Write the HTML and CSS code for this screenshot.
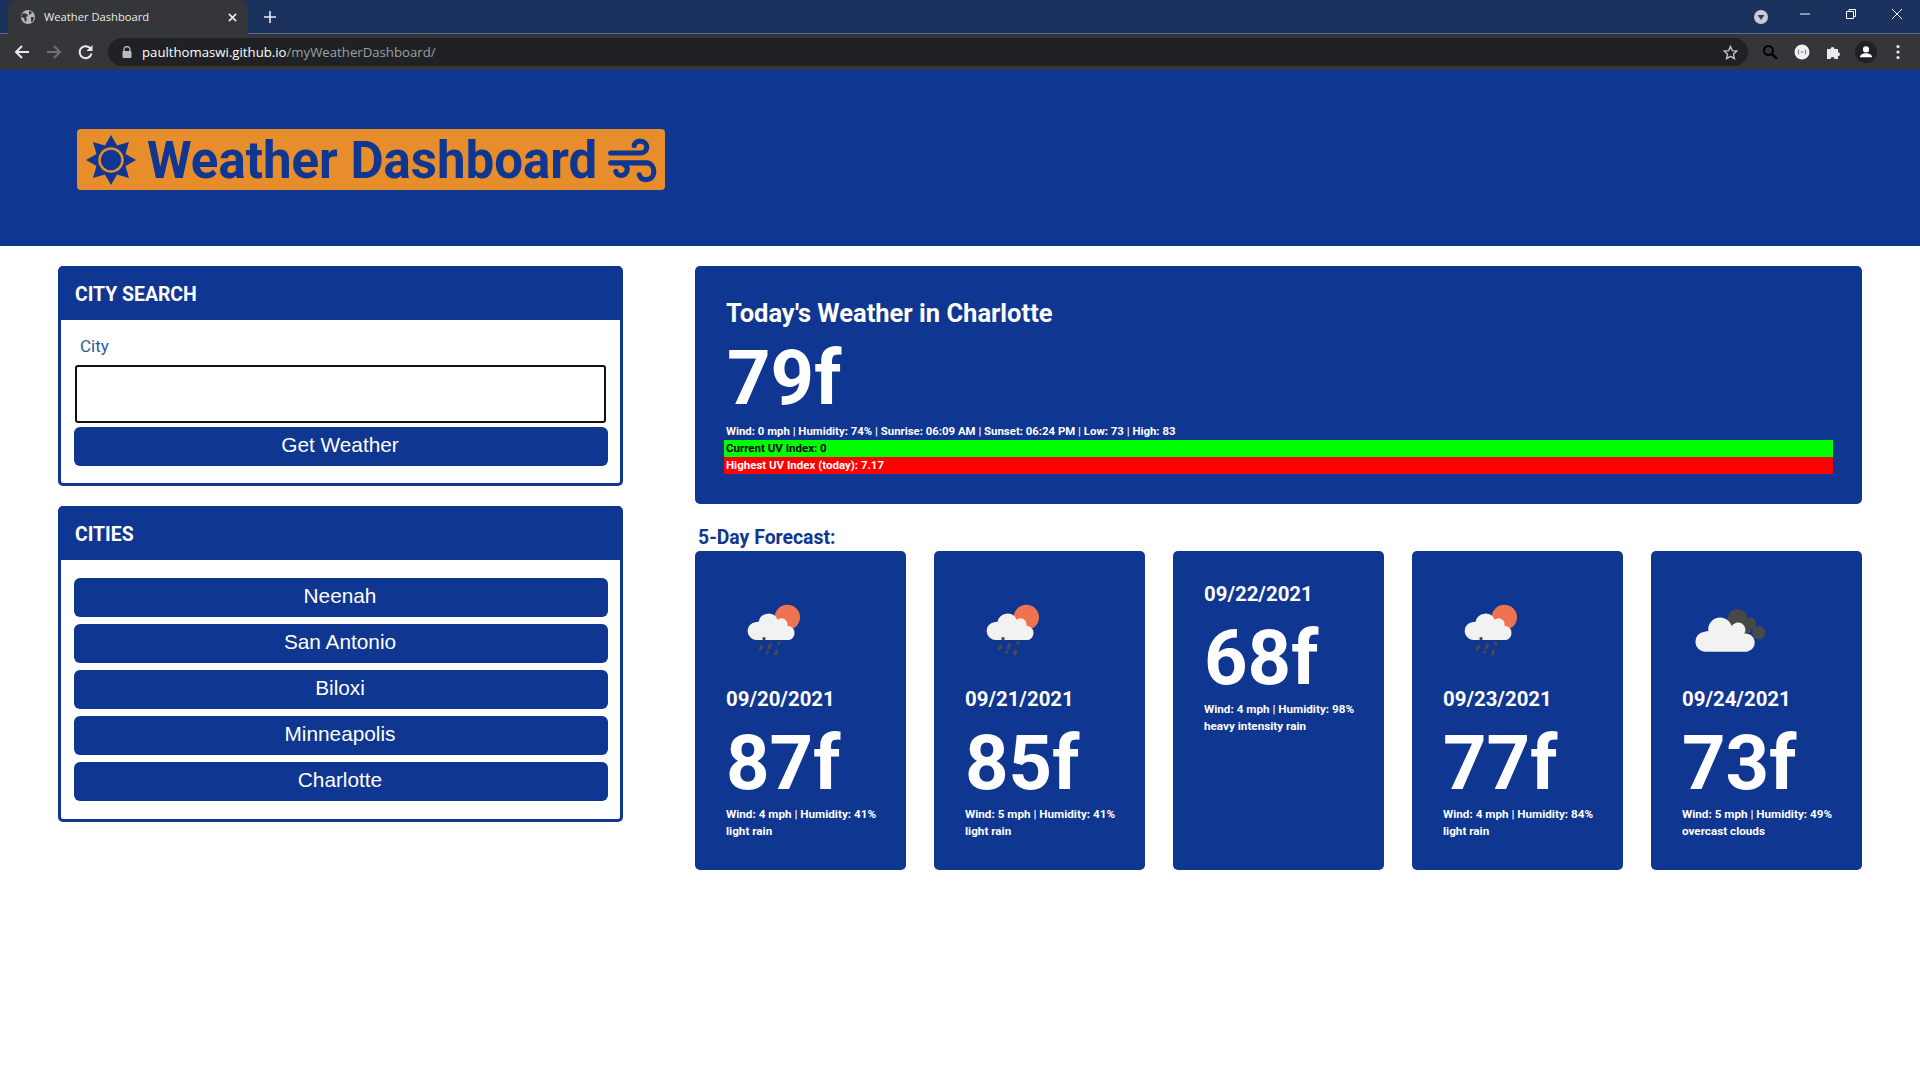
FILE: index.html
```html
<!DOCTYPE html>
<html lang="en">
<head>
  <meta charset="UTF-8" />
  <title>Weather Dashboard</title>
  <link rel="stylesheet" href="styles.css">
</head>
<body>

<svg class="defs" width="0" height="0">
  <symbol id="rainIcon" viewBox="-12 -24 300 300">
    <circle cx="172" cy="82" r="38" fill="#ef7350"/>
    <path d="M82 150a27 27 0 0 1-4-54c2-1 6-1 8-1a30 30 0 0 1 57-6 18 18 0 0 1 29 18 22 22 0 0 1 6 43z" fill="#f2f2f2"/>
    <circle cx="102" cy="146" r="5" fill="#444"/>
    <g stroke="#4a4a4a" stroke-width="9" stroke-linecap="round" fill="none">
      <path d="M95 168l-4 9M121 164l-4 10M147 158l-1 3M140 183l-3 9M113 186l-1 1"/>
    </g>
  </symbol>
  <symbol id="cloudIcon" viewBox="36 -39 300 300">
    <circle cx="202" cy="72" r="30" fill="#48484a"/>
    <circle cx="241" cy="85" r="18" fill="#48484a"/>
    <circle cx="266" cy="113" r="20" fill="#48484a"/>
    <path d="M195 60l30 5 20 45-30 10z" fill="#48484a"/>
    <path d="M108 170a30 30 0 0 1-4-60c3-1 7-1 11-1a36 36 0 0 1 70-16 21 21 0 0 1 38 23 27 27 0 0 1 8 54z" fill="#f2f2f0"/>
  </symbol>
</svg>

<div class="chrome">
  <div class="tab-strip">
    <div class="tab">
      <svg class="favicon" viewBox="0 0 16 16"><circle cx="8" cy="8" r="7" fill="#b4b6b9"/><path d="M3 4l4 1 1 2-2 1 1 3-2 2-1-4-3-1zM9 2l3 1-1 2-2 1zM11 8l3 0-1 4-2 1z" fill="#35363a"/></svg>
      <span class="tab-title">Weather Dashboard</span>
      <svg class="tab-x" viewBox="0 0 10 10"><path d="M1 1l8 8M9 1l-8 8" stroke="#e8eaed" stroke-width="1.8"/></svg>
    </div>
    <svg class="tab-plus" viewBox="0 0 12 12"><path d="M6 0v12M0 6h12" stroke="#e8eaed" stroke-width="1.6"/></svg>
    <div class="strip-space"></div>
    <div class="win-ctrls">
      <svg class="win-ico" viewBox="0 0 14 14"><circle cx="7" cy="7" r="7" fill="#c8ccd4"/><path d="M3.5 5h7L7 10z" fill="#35405c"/></svg>
      <svg class="win-ico" viewBox="0 0 14 14"><path d="M2 7h10" stroke="#fff"/></svg>
      <svg class="win-ico" viewBox="0 0 14 14"><path d="M2.5 4.5h7v7h-7zM5 4.500V2.500h6.500v7H9.500" fill="none" stroke="#fff"/></svg>
      <svg class="win-ico" viewBox="0 0 14 14"><path d="M2 2l10 10M12 2L2 12" stroke="#fff"/></svg>
    </div>
  </div>
  <div class="toolbar">
    <div class="tool-btn"><svg viewBox="0 0 16 16"><path d="M15 8H2M8 2L2 8l6 6" fill="none" stroke="#e8eaed" stroke-width="2"/></svg></div>
    <div class="tool-btn"><svg viewBox="0 0 16 16"><path d="M1 8h13M8 2l6 6-6 6" fill="none" stroke="#6f7175" stroke-width="2"/></svg></div>
    <div class="tool-btn"><svg viewBox="0 0 16 16"><path d="M13.500 9.500A6 6 0 1 1 12 4" fill="none" stroke="#e8eaed" stroke-width="2"/><path d="M14.500 1v6h-6z" fill="#e8eaed"/></svg></div>
    <div class="omnibox">
      <svg class="lock" viewBox="0 0 10 12"><path d="M2 5V3.500a3 3 0 0 1 6 0V5" fill="none" stroke="#b9bcc0" stroke-width="1.300"/><rect x="0.500" y="5" width="9" height="7" rx="1" fill="#b9bcc0"/></svg>
      <span class="url">paulthomaswi.github.io<span class="url-path">/myWeatherDashboard/</span></span>
      <svg class="star" viewBox="0 0 16 16"><path d="M8 1.500l2 4.500 4.800.5-3.600 3.200 1 4.800L8 12.100 3.800 14.500l1-4.800L1.200 6.500 6 6z" fill="none" stroke="#c4c6c9" stroke-width="1.400"/></svg>
    </div>
    <div class="tool-btn"><svg viewBox="0 0 16 16"><circle cx="6.500" cy="6.500" r="4.500" fill="none" stroke="#000" stroke-width="2"/><path d="M10 10l5 5" stroke="#000" stroke-width="2.400"/></svg></div>
    <div class="tool-btn"><svg viewBox="0 0 16 16"><circle cx="8" cy="8" r="7.500" fill="#f1f1f1"/><path d="M5 5.500C4 7 4 9 5 10.500M11 5.500c1 1.500 1 3.500 0 5M6.800 8h2.400" fill="none" stroke="#666" stroke-width="1"/></svg></div>
    <div class="tool-btn"><svg viewBox="0 0 16 16"><path d="M1 5h3.500a2 2 0 1 1 4 0H12v3.200a2 2 0 1 1 0 4V15H8.500a2 2 0 1 0-4 0H1z" fill="#e8eaed"/></svg></div>
    <div class="tool-btn"><div class="avatar"><svg viewBox="0 0 16 16"><circle cx="8" cy="5" r="3.500" fill="#fff"/><path d="M1 14c0-3 4-4.500 7-4.500s7 1.500 7 4.500z" fill="#fff"/></svg></div></div>
    <div class="tool-btn"><svg viewBox="0 0 16 16"><circle cx="8" cy="2.500" r="1.600" fill="#e8eaed"/><circle cx="8" cy="8" r="1.600" fill="#e8eaed"/><circle cx="8" cy="13.500" r="1.600" fill="#e8eaed"/></svg></div>
  </div>
</div>

<header class="site-header">
  <div class="banner">
    <svg class="banner-sun" viewBox="-25 -25 50 50">
      <polygon fill="#0f3690" points="0,-25 6,-14.500 18,-18 14.500,-6 25,0 14.500,6 18,18 6,14.500 0,25 -6,14.500 -18,18 -14.500,6 -25,0 -14.500,-6 -18,-18 -6,-14.500"/>
      <circle r="11.500" fill="#0f3690" stroke="#e88d2c" stroke-width="2.500"/>
    </svg>
    <h1 class="banner-title">Weather Dashboard</h1>
    <svg class="banner-wind" viewBox="50 35 145 135">
      <g fill="none" stroke="#0f3690" stroke-width="15" stroke-linecap="round">
        <path d="M60 82H148C172 82 172 47 146 47 136 47 130 53 129 60"/>
        <path d="M60 111H165C192 111 196 160 164 160 152 160 146 154 144 146"/>
        <path d="M100 116C116 124 108 148 90 148 82 148 76 143 75 136"/>
      </g>
    </svg>
  </div>
</header>

<main class="page">
  <section class="sidebar">
    <div class="panel">
      <h2 class="panel-head">CITY SEARCH</h2>
      <div class="panel-body search-body">
        <label class="city-label" for="cityInput">City</label>
        <input class="city-input" id="cityInput" type="text" />
        <button class="btn-blue">Get Weather</button>
      </div>
    </div>
    <div class="panel">
      <h2 class="panel-head">CITIES</h2>
      <div class="panel-body cities-body">
        <button class="btn-blue">Neenah</button>
        <button class="btn-blue">San Antonio</button>
        <button class="btn-blue">Biloxi</button>
        <button class="btn-blue">Minneapolis</button>
        <button class="btn-blue">Charlotte</button>
      </div>
    </div>
  </section>

  <section class="content">
    <div class="today">
      <h2 class="today-title">Today's Weather in Charlotte</h2>
      <div class="temp today-temp">79f</div>
      <div class="today-stats">Wind: 0 mph | Humidity: 74% | Sunrise: 06:09 AM | Sunset: 06:24 PM | Low: 73 | High: 83</div>
      <div class="uv uv-low">Current UV Index: 0</div>
      <div class="uv uv-high">Highest UV Index (today): 7.17</div>
    </div>

    <h3 class="forecast-head">5-Day Forecast:</h3>
    <div class="forecast">
      <div class="day-card">
        <svg class="day-icon"><use href="#rainIcon"/></svg>
        <div class="day-date">09/20/2021</div>
        <div class="temp">87f</div>
        <div class="day-info">Wind: 4 mph | Humidity: 41%<br>light rain</div>
      </div>
      <div class="day-card">
        <svg class="day-icon"><use href="#rainIcon"/></svg>
        <div class="day-date">09/21/2021</div>
        <div class="temp">85f</div>
        <div class="day-info">Wind: 5 mph | Humidity: 41%<br>light rain</div>
      </div>
      <div class="day-card">
        <div class="day-date">09/22/2021</div>
        <div class="temp">68f</div>
        <div class="day-info">Wind: 4 mph | Humidity: 98%<br>heavy intensity rain</div>
      </div>
      <div class="day-card">
        <svg class="day-icon"><use href="#rainIcon"/></svg>
        <div class="day-date">09/23/2021</div>
        <div class="temp">77f</div>
        <div class="day-info">Wind: 4 mph | Humidity: 84%<br>light rain</div>
      </div>
      <div class="day-card">
        <svg class="day-icon"><use href="#cloudIcon"/></svg>
        <div class="day-date">09/24/2021</div>
        <div class="temp">73f</div>
        <div class="day-info">Wind: 5 mph | Humidity: 49%<br>overcast clouds</div>
      </div>
    </div>
  </section>
</main>

</body>
</html>
```

FILE: styles.css
```css
*, *::before, *::after { margin: 0; padding: 0; box-sizing: border-box; }
body {
  font-family: Roboto, sans-serif;
  background: #fff;
  color: #fff;
  height: 1080px;
  overflow: hidden;
}
.defs { display: block; height: 0; }

/* browser frame */
.tab-strip {
  height: 34px;
  background: #1b315e;
  border-bottom: 1px solid #5a6a8c;
  display: flex;
  align-items: center;
  padding-left: 8px;
}
.tab {
  width: 240px;
  height: 34px;
  margin-bottom: -1px;
  align-self: flex-start;
  background: #35363a;
  border-radius: 8px 8px 0 0;
  display: flex;
  align-items: center;
  padding: 0 11px 0 12px;
}
.favicon { width: 16px; height: 16px; }
.tab-title {
  font-family: 'Open Sans', sans-serif;
  font-size: 11.2px;
  color: #e8eaed;
  margin-left: 8px;
  padding-bottom: 2px;
  flex-grow: 1;
}
.tab-x { width: 9px; height: 9px; }
.tab-plus { width: 12px; height: 12px; margin-left: 16px; }
.strip-space { flex-grow: 1; }
.win-ctrls { display: flex; align-self: flex-start; padding-right: 0; }
.win-ico { width: 14px; height: 14px; margin-top: 7px; margin-right: 32px; }
.win-ctrls .win-ico:first-child { margin-top: 10px; margin-right: 30px; }
.win-ctrls .win-ico:last-child { margin-right: 16px; }
.toolbar {
  height: 36px;
  background: #35363a;
  display: flex;
  align-items: center;
  padding: 0 6px;
}
.tool-btn {
  width: 32px;
  height: 32px;
  display: flex;
  align-items: center;
  justify-content: center;
}
.tool-btn svg { width: 16px; height: 16px; }
.omnibox {
  flex-grow: 1;
  height: 28px;
  margin: 0 6px;
  background: #202124;
  border-radius: 14px;
  display: flex;
  align-items: center;
  padding: 0 10px 0 14px;
}
.lock { width: 10px; height: 12px; }
.url {
  font-family: 'Open Sans', sans-serif;
  font-size: 13.2px;
  color: #fff;
  margin-left: 10px;
  flex-grow: 1;
}
.url-path { color: #9aa0a6; }
.star { width: 15px; height: 15px; }
.avatar {
  width: 22px;
  height: 22px;
  border-radius: 50%;
  background: #202124;
  display: flex;
  align-items: center;
  justify-content: center;
}
.tool-btn .avatar svg { width: 14px; height: 14px; }

/* page header */
.site-header {
  height: 176px;
  background: #0f3690;
  padding: 59px 0 0 77px;
}
.banner {
  width: 588px;
  height: 61px;
  background: #e88d2c;
  border-radius: 4px;
  color: #0f3690;
  display: flex;
  align-items: center;
  padding-left: 9px;
}
.banner-sun { width: 50px; height: 50px; flex-shrink: 0; }
.banner-title {
  font-size: 51px;
  font-weight: 700;
  margin-left: 11px;
  padding-top: 2px;
  width: 447px;
  white-space: nowrap;
}
.banner-wind { width: 50px; height: 46px; margin-left: 13px; flex-shrink: 0; }

/* main layout */
.page {
  display: grid;
  grid-template-columns: 565px minmax(0, 1fr);
  column-gap: 72px;
  padding: 20px 58px 0;
}
.sidebar { display: flex; flex-direction: column; gap: 20px; }
.panel {
  border: 3px solid #0f3690;
  border-radius: 5px;
}
.panel-head {
  height: 54px;
  margin-top: -3px;
  background: #0f3690;
  font-size: 19.4px;
  font-weight: 700;
  line-height: 58px;
  padding-left: 14px;
}
.panel-body { padding: 0 12px 0 13px; }
.search-body { padding-bottom: 17px; }
.cities-body { padding-top: 18px; padding-bottom: 18px; }
.city-label {
  display: block;
  font-size: 17px;
  line-height: 24px;
  color: #2b5c99;
  padding: 14px 0 0 6px;
  height: 45px;
}
.city-input {
  display: block;
  width: 531px;
  height: 58px;
  margin-left: 1px;
  border: 2px solid #111;
  border-radius: 3px;
  background: #fff;
}
.btn-blue {
  display: block;
  width: 100%;
  height: 39px;
  margin-top: 4px;
  padding: 0 2px 4px 0;
  background: #0f3690;
  color: #fff;
  border: none;
  border-radius: 6px;
  font-family: 'Liberation Sans', sans-serif;
  font-size: 20.8px;
}
.cities-body .btn-blue { margin: 0 0 7px; }
.cities-body .btn-blue:last-child { margin-bottom: 0; }

/* today */
.today {
  height: 238px;
  background: #0f3690;
  border-radius: 5px;
  padding: 30px 29px 0;
}
.today-title { font-size: 25.5px; font-weight: 700; line-height: 34px; padding-left: 2px; }
.temp {
  font-size: 76px;
  font-weight: 700;
  line-height: 84px;
  white-space: nowrap;
}
.day-card .temp { margin-top: 9px; margin-bottom: 1px; }
.today-temp { padding-left: 3px; margin-top: 6px; margin-bottom: 3px; }
.today-stats { font-size: 11.4px; font-weight: 700; line-height: 16px; padding-left: 2px; margin-bottom: 1px; }
.uv {
  height: 17px;
  font-size: 11.5px;
  font-weight: 700;
  line-height: 16px;
  padding-left: 2px;
}
.uv-low { background: #00ff00; color: #000; }
.uv-high { background: #ff0000; color: #fff; }

/* forecast */
.forecast-head {
  font-size: 19.4px;
  font-weight: 700;
  color: #0f3690;
  line-height: 24px;
  padding: 22px 0 0 3px;
  height: 47px;
}
.forecast {
  display: grid;
  grid-template-columns: repeat(5, minmax(0, 1fr));
  column-gap: 28px;
}
.day-card {
  height: 319px;
  background: #0f3690;
  border-radius: 5px;
  padding: 31px 31px 0;
}
.day-icon { display: block; width: 100px; height: 100px; }
.day-date { font-size: 20.4px; font-weight: 700; line-height: 25px; }
.day-icon + .day-date { margin-top: 5px; }
.day-info { font-size: 11.7px; font-weight: 700; line-height: 17px; white-space: nowrap; }
```
